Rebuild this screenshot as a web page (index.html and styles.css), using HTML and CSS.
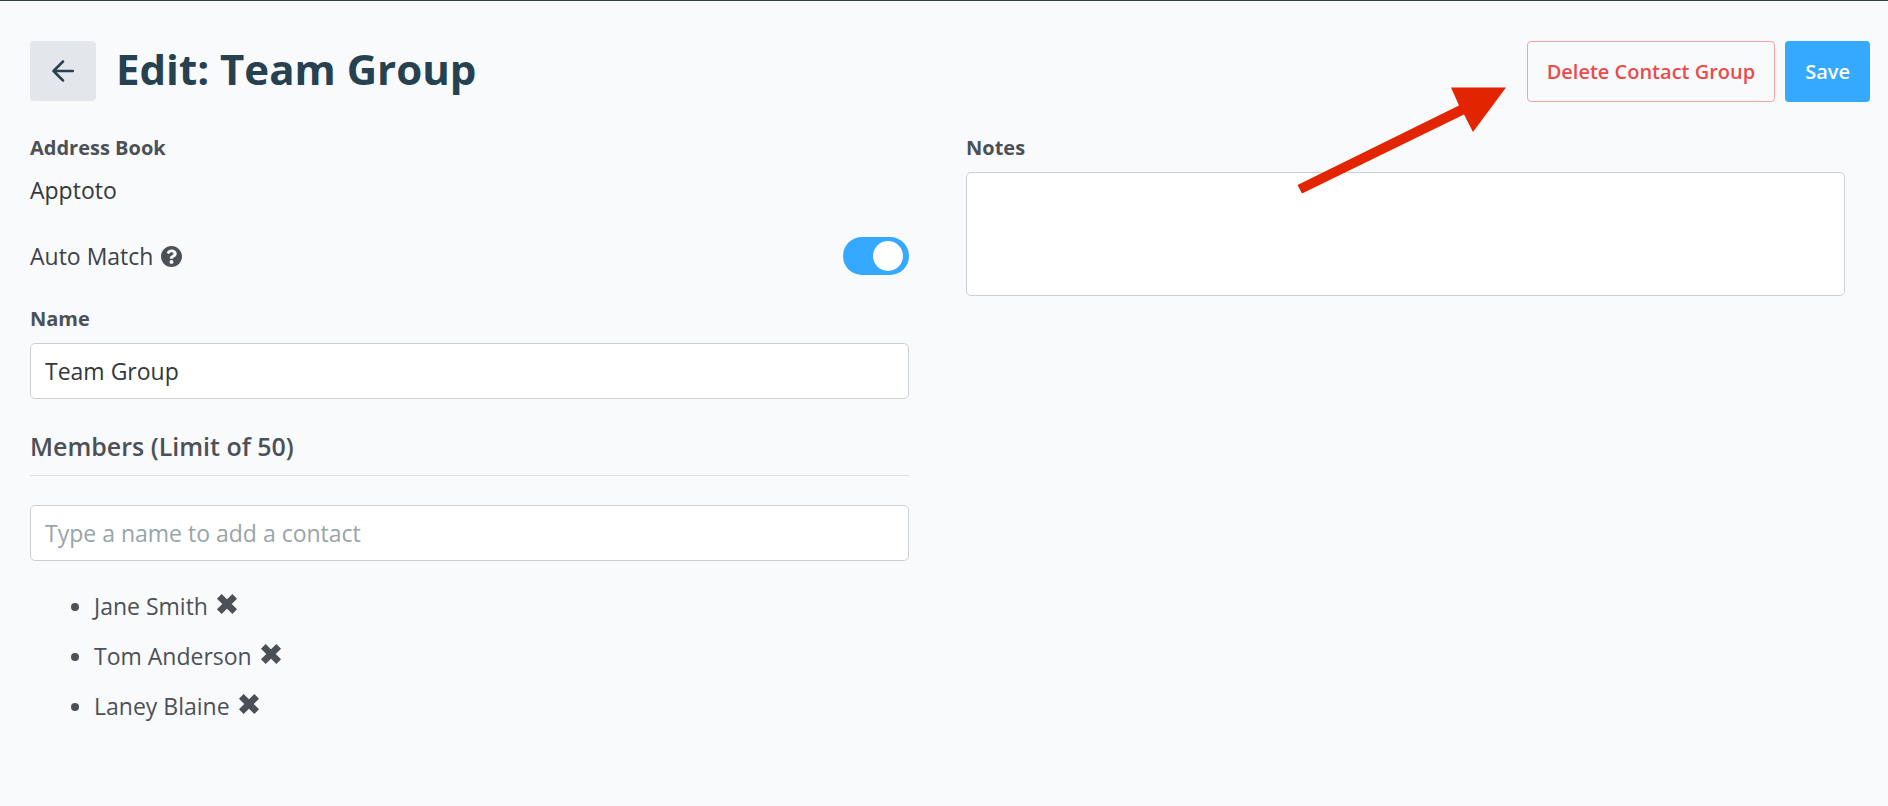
FILE: index.html
```
<!DOCTYPE html>
<html lang="en">
<head>
<meta charset="utf-8">
<meta name="viewport" content="width=device-width, initial-scale=1">
<title>Edit: Team Group</title>
<link rel="stylesheet" href="styles.css">
</head>
<body>
<main class="page">
  <header class="header">
    <button class="back" type="button" aria-label="Back">
      <svg width="22" height="22" viewBox="0 0 22 22" aria-hidden="true"><path d="M21 11H1.500M11 1.500L1.500 11L11 20.500"/></svg>
    </button>
    <h1 class="title">Edit: Team Group</h1>
    <div class="actions">
      <button class="btn btn-danger" type="button">Delete Contact Group</button>
      <button class="btn btn-primary" type="submit" form="group-form">Save</button>
    </div>
  </header>

  <form class="columns" id="group-form">
    <div class="column">
      <div class="label">Address Book</div>
      <div class="value">Apptoto</div>

      <div class="toggle-row">
        <label class="toggle-label" for="auto-match">Auto Match
          <svg class="help" viewBox="8 8 496 496" aria-hidden="true"><path d="M504 256c0 136.997-111.043 248-248 248S8 392.997 8 256C8 119.083 119.043 8 256 8s248 111.083 248 248zM262.655 90c-54.497 0-89.255 22.957-116.549 63.758-3.536 5.286-2.353 12.415 2.715 16.258l34.699 26.31c5.205 3.947 12.621 3.008 16.665-2.122 17.864-22.658 30.113-35.797 57.303-35.797 20.429 0 45.698 13.148 45.698 32.958 0 14.976-12.363 22.667-32.534 33.976C247.128 238.528 216 254.941 216 296v4c0 6.627 5.373 12 12 12h56c6.627 0 12-5.373 12-12v-1.333c0-28.462 83.186-29.647 83.186-106.667 0-58.002-60.165-102-116.531-102zM256 338c-25.365 0-46 20.635-46 46 0 25.364 20.635 46 46 46s46-20.636 46-46c0-25.365-20.635-46-46-46z"/></svg>
        </label>
        <input class="toggle" id="auto-match" type="checkbox" role="switch" checked>
      </div>

      <label class="label" for="name">Name</label>
      <input class="field" id="name" type="text" value="Team Group">

      <h2 class="section">Members (Limit of 50)</h2>
      <input class="field" id="member" type="text" aria-label="Add a contact" placeholder="Type a name to add a contact">

      <ul class="members">
        <li>Jane Smith <button class="remove" type="button" aria-label="Remove Jane Smith"><svg viewBox="0 0 20 20"><path d="M3 3L17 17M17 3L3 17"/></svg></button></li>
        <li>Tom Anderson <button class="remove" type="button" aria-label="Remove Tom Anderson"><svg viewBox="0 0 20 20"><path d="M3 3L17 17M17 3L3 17"/></svg></button></li>
        <li>Laney Blaine <button class="remove" type="button" aria-label="Remove Laney Blaine"><svg viewBox="0 0 20 20"><path d="M3 3L17 17M17 3L3 17"/></svg></button></li>
      </ul>
    </div>

    <div class="column">
      <label class="label" for="notes">Notes</label>
      <textarea class="field notes" id="notes"></textarea>
    </div>
  </form>

  <svg class="pointer" width="210" height="107" viewBox="0 0 210 107" aria-hidden="true"><path d="M0.500 98L162 18.500L154 0.500H209L176 45L167 27.500L5 106.500Z"/></svg>
</main>
</body>
</html>
```
FILE: styles.css
```
* {
  box-sizing: border-box;
}

body {
  margin: 0;
  background: #f9fafc;
  color: #4b5156;
  font-family: "Open Sans", "Noto Sans", sans-serif;
  font-size: 23px;
  line-height: 36px;
}

button,
input,
textarea {
  font: inherit;
}

.page {
  position: relative;
  min-height: 100vh;
  padding: 40px 18px 40px 30px;
  border-top: 1px solid #2d3f47;
}

.header {
  display: flex;
  align-items: flex-start;
  gap: 20px;
}

.back {
  display: grid;
  place-items: center;
  width: 66px;
  height: 60px;
  padding: 0;
  border: 0;
  border-radius: 4px;
  background: #e3e7eb;
}

.back svg {
  fill: none;
  stroke: #264150;
  stroke-width: 2.5;
  stroke-linecap: round;
  stroke-linejoin: round;
}

.title {
  margin: 0;
  color: #264150;
  font-size: 42px;
  font-weight: 700;
  line-height: 56px;
}

.actions {
  display: flex;
  gap: 10px;
  margin-left: auto;
}

.btn {
  height: 61px;
  padding: 0 19px;
  border: 1px solid transparent;
  border-radius: 4px;
  font-size: 20px;
  font-weight: 600;
  white-space: nowrap;
}

.btn-danger {
  border-color: #f3a3a3;
  background: transparent;
  color: #ea4b4b;
}

.btn-primary {
  background: #34a9ff;
  color: #fff;
}

.columns {
  display: grid;
  grid-template-columns: 1fr 1fr;
  gap: 57px;
  margin-top: 32px;
  margin-right: 25px;
}

.label {
  display: block;
  margin-bottom: 10px;
  font-size: 20px;
  font-weight: 700;
  line-height: 28px;
}

.value {
  color: #33383c;
}

.toggle-row {
  display: flex;
  align-items: center;
  justify-content: space-between;
  margin: 29px 0 30px;
}

.toggle-label {
  display: flex;
  align-items: center;
  gap: 8px;
  color: #3d4347;
}

.help {
  width: 21px;
  height: 21px;
  fill: #4b5156;
}

.toggle {
  appearance: none;
  width: 66px;
  height: 38px;
  margin: 0;
  padding: 4px 6px;
  border-radius: 19px;
  background: #b8c0c6;
}

.toggle::before {
  content: "";
  display: block;
  width: 30px;
  height: 30px;
  border-radius: 50%;
  background: #fff;
}

.toggle:checked {
  background: #34a9ff;
}

.toggle:checked::before {
  margin-left: auto;
}

.field {
  display: block;
  width: 100%;
  height: 56px;
  padding: 0 14px;
  border: 1px solid #cbd0d4;
  border-radius: 5px;
  background: #fff;
  color: #33383c;
}

.field::placeholder {
  color: #98a5a8;
  opacity: 1;
}

.notes {
  height: 124px;
  padding: 10px 14px;
  resize: none;
}

.section {
  margin: 29px 0;
  padding-bottom: 11px;
  border-bottom: 1px solid #dde1e5;
  font-size: 25px;
  font-weight: 600;
  line-height: 36px;
}

.members {
  display: grid;
  gap: 14px;
  margin: 27px 0 0;
  padding-left: 64px;
}

.remove {
  margin-left: 2px;
  padding: 0;
  border: 0;
  background: none;
  line-height: 20px;
}

.remove svg {
  width: 22px;
  height: 22px;
  fill: none;
  stroke: #4b5156;
  stroke-width: 6;
}

.pointer {
  position: absolute;
  top: 86px;
  right: 381px;
  fill: #e22400;
}
```
